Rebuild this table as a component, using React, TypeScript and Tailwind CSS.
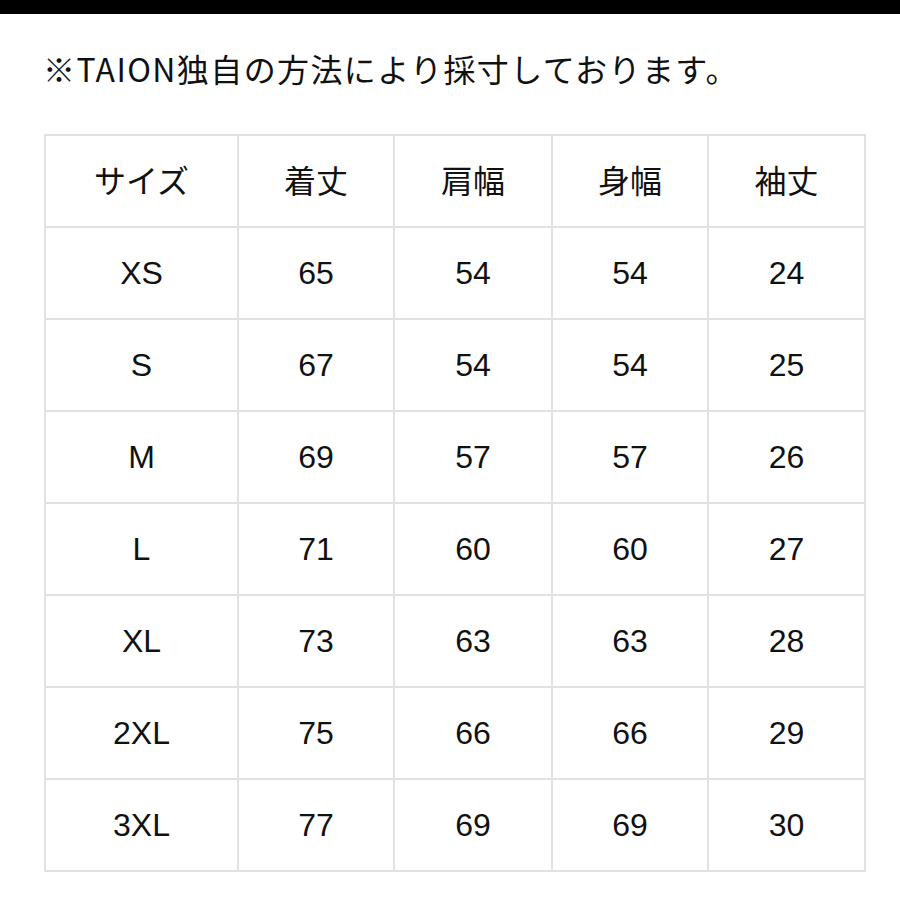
import React from "react";

const headers = ["サイズ", "着丈", "肩幅", "身幅", "袖丈"];
const rows: string[][] = [
  ["XS", "65", "54", "54", "24"],
  ["S", "67", "54", "54", "25"],
  ["M", "69", "57", "57", "26"],
  ["L", "71", "60", "60", "27"],
  ["XL", "73", "63", "63", "28"],
  ["2XL", "75", "66", "66", "29"],
  ["3XL", "77", "69", "69", "30"],
];

export default function App() {
  return (
    <div className="w-[900px] h-[900px] bg-white overflow-hidden">
      <div className="h-[14px] bg-black" />
      <div
        className="pl-[43px] pt-[38px] h-[72px] text-[32px] leading-none tracking-[1.4px] text-[#111]"
        style={{ fontFamily: '"Noto Sans CJK JP", "Noto Sans", sans-serif' }}
      >
        ※TAION独自の方法により採寸しております。
      </div>
      <div className="ml-[44px] mt-[48px] w-fit">
        <div className="grid grid-cols-[191px_154px_156px_154px_155px] gap-[2px] p-[2px] bg-[#e1e1e1]">
          {headers.map((h) => (
            <div
              key={h}
              className="h-[90px] bg-white flex items-center justify-center pb-[5px] text-[32px] leading-none text-[#111]"
              style={{ fontFamily: '"Noto Sans CJK JP", sans-serif' }}
            >
              {h}
            </div>
          ))}
          {rows.map((r) =>
            r.map((c, i) => (
              <div
                key={r[0] + i}
                className="h-[90px] bg-white flex items-center justify-center text-[32px] leading-none text-[#111]"
                style={{ fontFamily: '"Liberation Sans", Arial, sans-serif' }}
              >
                {c}
              </div>
            ))
          )}
        </div>
      </div>
    </div>
  );
}
